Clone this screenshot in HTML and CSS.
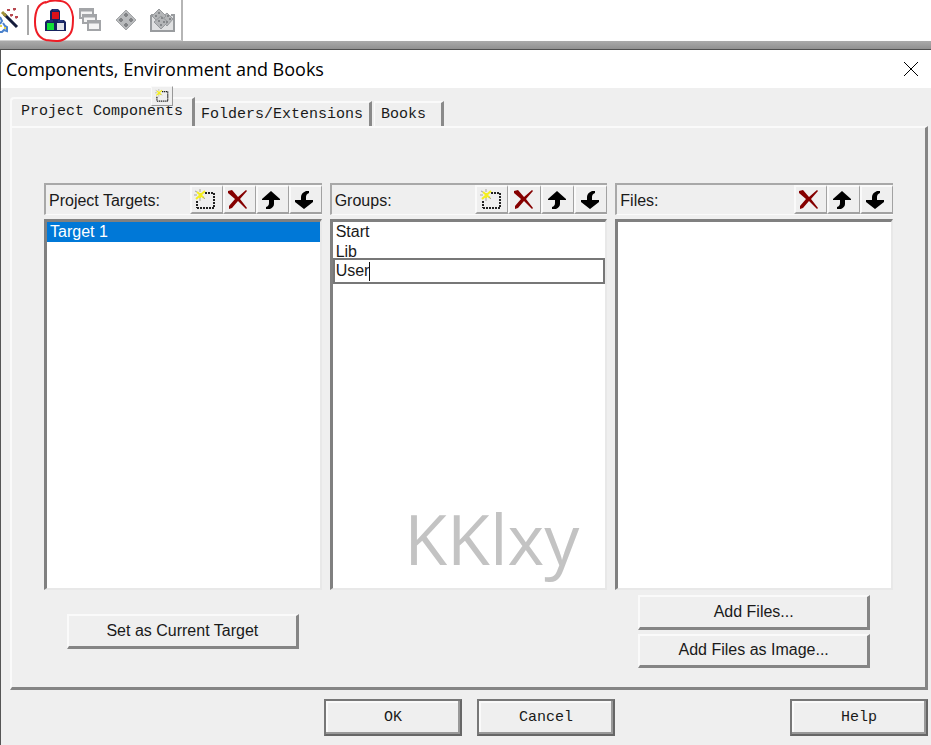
FILE: index.html
```html
<!DOCTYPE html>
<html lang="en">
<head>
<meta charset="utf-8">
<title>Components, Environment and Books</title>
<link rel="stylesheet" href="styles.css">
</head>
<body>
<svg class="defs" aria-hidden="true">
  <symbol id="new" viewBox="0 0 22 22">
    <path d="M11 4h9M20 4v15M3 19h17M3 12v7" fill="none" stroke="#222" stroke-width="2" stroke-dasharray="2 1"/>
    <path d="M3 3l7 6M11 2l-9 8M6 4v5" fill="none" stroke="#f4ee20" stroke-width="2"/>
    <path d="M1 2l2 1M6 0v3M0 6h3M6 9v3M9 8l2 2" fill="none" stroke="#aaa89a" stroke-width="1"/>
  </symbol>
  <symbol id="delete" viewBox="0 0 22 22">
    <path d="M1 2l4-1 6 7 8-7 1 1-7 8 7 9-1 1-8-8-6 7-3 1v-3l6-7-7-6z" fill="#850000"/>
  </symbol>
  <symbol id="up" viewBox="0 0 22 22">
    <path d="M11 2l9 8v1h-6v4q0 3-4 5H6v-2q3-1 3-4v-3H2v-1z"/>
  </symbol>
  <symbol id="down" viewBox="0 0 22 22">
    <path d="M11 20l-9-7v-2h6V8q0-4 5-6h3v2q-3 1-3 4v3h7v2z"/>
  </symbol>
</svg>

<div class="toolbar">
  <button class="tool wizard" aria-label="Configuration wizard"><svg width="22" height="28" viewBox="0 0 22 28">
    <path d="M4 8l13 13" stroke="#151c3c" stroke-width="3"/><path d="M2 6l4 4" stroke="#a09038" stroke-width="3"/>
    <path d="M7 4h3M13 3h3M10 9h3M15 11h3" stroke="#b84850" stroke-width="2"/><path d="M9 3l-2 2M15 2l-1 3M12 8l-1 3M17 10l-1 3" stroke="#b84850"/>
    <path d="M0 11l2 4-2 3M3 17l2 3 2 1v4l-3-1-2 2H0" fill="none" stroke="#4b82cc" stroke-width="2"/><path d="M0 20h2M4 22h2" stroke="#e6d648" stroke-width="2"/>
  </svg></button>
  <span class="divider"></span>
  <button class="tool" aria-label="Components, environment and books"><svg width="24" height="28" viewBox="0 0 24 28">
    <path d="M9 3h6l2 2v9h4l2 2v9H2v-9l2-2h3V5z" fill="#17235f"/>
    <path d="M9 6h7v7H9z" fill="#dc1018"/><path d="M4 17h7v7H4z" fill="#10e038"/><path d="M14 17h7v7h-7z" fill="#dfe2e8"/>
    <path d="M10 4h5M5 15h5M15 15h5" stroke="#2e4292"/>
  </svg></button>
  <button class="tool" aria-label="Windows"><svg width="24" height="28" viewBox="0 0 24 28">
    <g fill="#f4f4f4" stroke="#a3a5a8" stroke-width="2"><path d="M1 3h13v9H1z"/><path d="M1 4h13" stroke-width="3"/><path d="M4 9h13v8H4z"/><path d="M4 10h13" stroke-width="3"/><path d="M9 15h12v9H9z"/><path d="M9 16h12" stroke-width="3"/></g>
  </svg></button>
  <button class="tool" aria-label="Pack"><svg width="24" height="28" viewBox="0 0 24 28">
    <path d="M11 4l10 10-10 10L1 14z" fill="#b8babc" stroke="#a2a4a6"/>
    <path d="M11 7v4M9 9h4M4 14h4M6 12v4M14 14h4M16 12v4M11 17v4M9 19h4" stroke="#808285" stroke-width="2"/>
  </svg></button>
  <button class="tool last" aria-label="Pack installer"><svg width="26" height="28" viewBox="0 0 26 28">
    <path d="M2 9h3M22 9h3v16H2V9" fill="#e0e1e2" stroke="#999c9f" stroke-width="2"/>
    <path d="M18 7l6 6-6 7-7-7z" fill="#b4b6b8" stroke="#96999c"/>
    <path d="M10 3l7 7-7 7-7-7z" fill="#b4b6b8" stroke="#96999c"/>
    <path d="M12 10l7 6-7 7-7-7z" fill="#b4b6b8" stroke="#96999c"/>
    <path d="M9 7h2M6 10h2M12 12h2M9 15h2M14 16h2M11 19h2M18 10h2M20 13h2M17 16h2" stroke="#85888b" stroke-width="2"/>
  </svg></button>
  <svg class="ring" viewBox="0 0 44 44" aria-hidden="true"><path d="M14 2C4 4 3 14 3 22c0 11 4 16 11 18 7 1 15 3 21-3 6-4 6-12 6-20C40 9 36 2 29 1c-5-1-11-1-16 2" fill="none" stroke="#ee1c25" stroke-width="2"/></svg>
</div>

<div class="edge"></div>
<main class="dialog">
  <header class="titlebar">
    <h1>Components, Environment and Books</h1>
    <button class="close" aria-label="Close"><svg width="16" height="16" viewBox="0 0 16 16"><path d="M1 1l14 14M15 1L1 15" stroke="#000"/></svg></button>
  </header>
  <div class="body">
    <nav class="tabs" role="tablist">
      <button class="tab active" role="tab" aria-selected="true">Project Components</button>
      <button class="tab" role="tab">Folders/Extensions</button>
      <button class="tab books" role="tab">Books</button>
      <span class="floating"><svg width="14" height="16"><use href="#new"/></svg></span>
    </nav>
    <section class="panel">
      <div class="column">
        <div class="head"><h2>Project Targets:</h2>
          <button class="act" aria-label="New target"><svg><use href="#new"/></svg></button><button class="act" aria-label="Delete target"><svg><use href="#delete"/></svg></button><button class="act" aria-label="Move target up"><svg><use href="#up"/></svg></button><button class="act" aria-label="Move target down"><svg><use href="#down"/></svg></button>
        </div>
        <ul class="list"><li class="selected">Target 1</li></ul>
        <div class="under single"><button class="btn">Set as Current Target</button></div>
      </div>
      <div class="column">
        <div class="head"><h2>Groups:</h2>
          <button class="act" aria-label="New group"><svg><use href="#new"/></svg></button><button class="act" aria-label="Delete group"><svg><use href="#delete"/></svg></button><button class="act" aria-label="Move group up"><svg><use href="#up"/></svg></button><button class="act" aria-label="Move group down"><svg><use href="#down"/></svg></button>
        </div>
        <ul class="list"><li>Start</li><li>Lib</li><li class="edit"><input aria-label="Group name" value="User"><span class="caret"></span></li></ul>
        <div class="under"></div>
        <span class="watermark">KKlxy</span>
      </div>
      <div class="column">
        <div class="head"><h2>Files:</h2>
          <button class="act" aria-label="Delete file"><svg><use href="#delete"/></svg></button><button class="act" aria-label="Move file up"><svg><use href="#up"/></svg></button><button class="act" aria-label="Move file down"><svg><use href="#down"/></svg></button>
        </div>
        <ul class="list"></ul>
        <div class="under"><button class="btn">Add Files...</button><button class="btn">Add Files as Image...</button></div>
      </div>
    </section>
    <footer class="footer">
      <button class="cmd">OK</button>
      <button class="cmd">Cancel</button>
      <button class="cmd help">Help</button>
    </footer>
  </div>
</main>
</body>
</html>
```
FILE: styles.css
```css
* { box-sizing: border-box; }

body {
  margin: 0;
  min-height: 100vh;
  display: flex;
  flex-direction: column;
  background: #fff;
  color: #1a1a1a;
  font: 16px/20px "Liberation Sans", Arial, sans-serif;
}

button {
  padding: 0;
  border: 0;
  background: none;
  color: inherit;
  font: inherit;
}

h1, h2, ul { margin: 0; padding: 0; font-weight: normal; }
.defs { position: absolute; width: 0; height: 0; }

/* Toolbar strip */
.toolbar {
  position: relative;
  display: flex;
  align-items: center;
  align-self: flex-start;
  width: 183px;
  height: 41px;
  border-right: 2px solid #b5b5b5;
  border-bottom: 1px solid #d0d0d0;
}
.tool { display: flex; width: 24px; margin-right: 12px; }
.tool svg { flex: none; }
.wizard { width: 22px; margin-right: 5px; }
.last { width: 26px; margin: 0 0 0 -2px; }
.divider { width: 2px; height: 30px; margin-right: 14px; background: #a8a8a8; }
.ring { position: absolute; left: 32px; top: 0; width: 44px; height: 44px; z-index: 1; }

/* Dialog window */
.edge {
  height: 9px;
  border-bottom: 1px solid #505050;
  background: linear-gradient(#aaa, #919191);
}
.dialog { flex: 1; display: flex; flex-direction: column; }
.titlebar {
  display: flex;
  align-items: center;
  justify-content: space-between;
  height: 38px;
  padding: 0 12px 0 5px;
  border-left: 1px solid #555;
  background: #fff;
}
.titlebar h1 { font: 18px/26px "Open Sans", sans-serif; color: #000; }
.close { display: flex; }

.body {
  flex: 1;
  display: flex;
  flex-direction: column;
  padding: 9px 3px 9px 9px;
  border-left: 1px solid #555;
  background: #efefef;
}

/* Tabs */
.tabs { position: relative; display: flex; align-items: flex-end; height: 29px; }
.tab {
  height: 25px;
  padding: 1px 6px 0;
  border-top: 2px solid #fafafa;
  border-right: 3px solid #8a8a8a;
  font: 15px/20px "Liberation Mono", monospace;
  color: #1a1a1a;
}
.tab.active {
  height: 29px;
  padding: 0 9px 1px;
  border-left: 2px solid #fafafa;
  border-radius: 4px 0 0;
}
.tab.books { margin-left: 2px; padding-right: 15px; border-left: 1px solid #fafafa; }
.floating {
  position: absolute;
  left: 141px;
  top: -11px;
  display: flex;
  padding: 1px 3px;
  border: 1px solid #fafafa;
  border-right-color: #999;
  border-bottom-color: #999;
  background: #efefef;
}

/* Tab page */
.panel {
  flex: 1;
  display: grid;
  grid-template-columns: repeat(3, 1fr);
  gap: 8px;
  padding: 55px 32px 19px;
  border: 2px solid;
  border-color: #fafafa #858585 #858585 #fafafa;
  border-right-width: 3px;
  border-bottom-width: 3px;
}
.column { position: relative; display: flex; flex-direction: column; }
.head {
  display: flex;
  height: 32px;
  border-top: 2px solid #a8a8a8;
  border-left: 2px solid #a8a8a8;
  border-bottom: 1px solid #fafafa;
}
.head h2 { flex: 1; padding-left: 3px; font-size: 16px; line-height: 31px; }
.act {
  display: flex;
  align-items: center;
  justify-content: center;
  width: 33px;
  padding-right: 3px;
  border: 2px solid;
  border-color: #fafafa #a2a2a2 #a2a2a2 #fafafa;
  border-right-width: 1px;
}
.act svg { flex: none; width: 22px; height: 22px; }

.list {
  flex: 1;
  margin-top: 4px;
  list-style: none;
  background: #fff;
  border: 3px solid;
  border-color: #808080 #e8e8e8 #e8e8e8 #808080;
  border-right-width: 2px;
  border-bottom-width: 2px;
}
.list li { height: 20px; padding-left: 3px; }
.list .selected { background: #0078d7; color: #fff; }
.list .edit {
  position: relative;
  display: flex;
  align-items: center;
  height: 26px;
  margin-top: -4px;
  padding-left: 1px;
  border: 2px solid #777;
  background: #fff;
}
.edit input {
  field-sizing: content;
  padding: 0;
  border: 0;
  outline: 0;
  background: none;
  color: inherit;
  font: inherit;
}
.caret { width: 1px; height: 19px; background: #111; }

.under {
  display: flex;
  flex-direction: column;
  gap: 4px;
  height: 78px;
  padding: 5px 23px 0;
}
.under.single { padding-top: 24px; }
.btn {
  height: 35px;
  border: 2px solid;
  border-color: #fafafa #858585 #858585 #fafafa;
  border-right-width: 3px;
  border-bottom-width: 3px;
}
.watermark {
  position: absolute;
  right: 28px;
  bottom: 90px;
  font: 70px/80px "Open Sans", sans-serif;
  color: #c3c3c3;
}

/* Command buttons */
.footer { display: flex; justify-content: flex-end; gap: 15px; padding-top: 9px; }
.cmd {
  width: 138px;
  height: 37px;
  border: 2px solid #777;
  border-right-color: #666;
  border-bottom-color: #666;
  box-shadow: inset -2px -2px #999, inset 2px 2px #fafafa;
  font: 15px/20px "Liberation Mono", monospace;
  color: #1a1a1a;
}
.help { margin-left: 160px; }
```
